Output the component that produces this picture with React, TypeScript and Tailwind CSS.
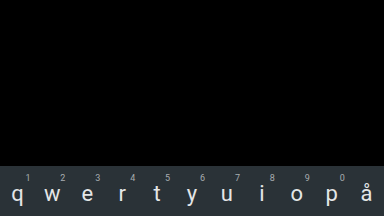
const keys = [
  { l: 'q', d: '1' },
  { l: 'w', d: '2' },
  { l: 'e', d: '3' },
  { l: 'r', d: '4' },
  { l: 't', d: '5' },
  { l: 'y', d: '6' },
  { l: 'u', d: '7' },
  { l: 'i', d: '8' },
  { l: 'o', d: '9' },
  { l: 'p', d: '0' },
  { l: 'å', d: '' },
];

export default function App() {
  return (
    <div className="w-[384px] h-[216px] bg-black flex flex-col overflow-hidden" style={{ fontFamily: 'Roboto, "Noto Sans", sans-serif' }}>
      <div className="flex-1" />
      <div className="h-[50px] bg-[#2a3237] grid grid-cols-11">
        {keys.map((k) => (
          <div key={k.l} className="relative flex justify-center">
            {k.d && (
              <span className="absolute top-[8px] left-1/2 ml-[8px] text-[9px] leading-none text-[#a8adb0]">
                {k.d}
              </span>
            )}
            <span className="mt-[17px] text-[22px] leading-none text-[#e4e6e7]">{k.l}</span>
          </div>
        ))}
      </div>
    </div>
  );
}
